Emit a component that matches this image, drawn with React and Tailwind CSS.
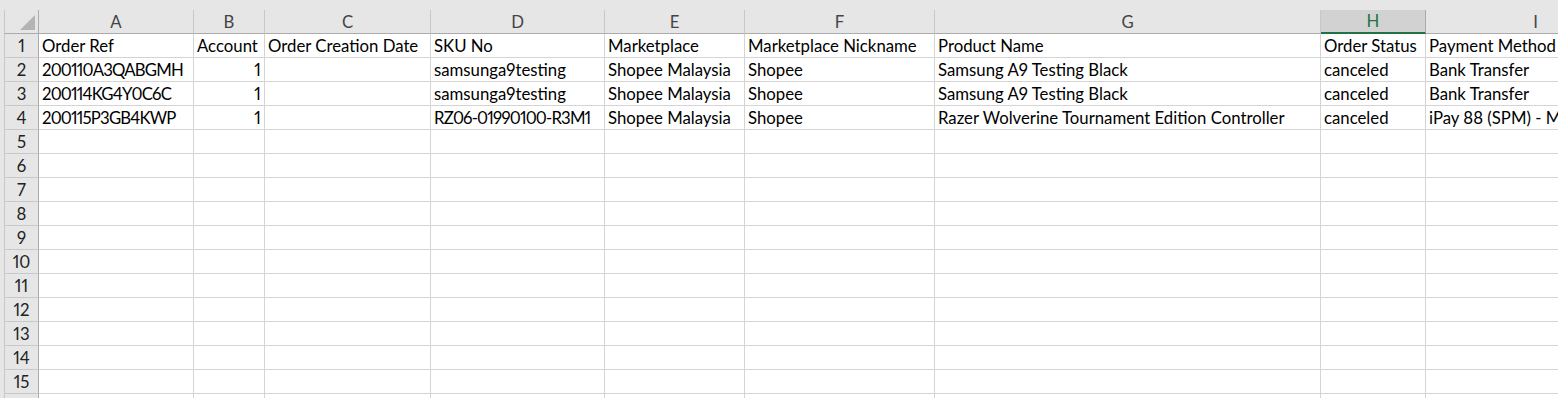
import React from 'react';

const columns = [
  { key: 'A', width: 'w-[155px]' },
  { key: 'B', width: 'w-[71px]' },
  { key: 'C', width: 'w-[166px]' },
  { key: 'D', width: 'w-[174px]' },
  { key: 'E', width: 'w-[140px]' },
  { key: 'F', width: 'w-[190px]' },
  { key: 'G', width: 'w-[386px]' },
  { key: 'H', width: 'w-[105px]' },
  { key: 'I', width: 'w-[220px]' },
];

const rows = [
  ['Order Ref', 'Account', 'Order Creation Date', 'SKU No', 'Marketplace', 'Marketplace Nickname', 'Product Name', 'Order Status', 'Payment Method'],
  ['200110A3QABGMH', 1, '', 'samsunga9testing', 'Shopee Malaysia', 'Shopee', 'Samsung A9 Testing Black', 'canceled', 'Bank Transfer'],
  ['200114KG4Y0C6C', 1, '', 'samsunga9testing', 'Shopee Malaysia', 'Shopee', 'Samsung A9 Testing Black', 'canceled', 'Bank Transfer'],
  ['200115P3GB4KWP', 1, '', 'RZ06-01990100-R3M1', 'Shopee Malaysia', 'Shopee', 'Razer Wolverine Tournament Edition Controller', 'canceled', 'iPay 88 (SPM) - Maybank2u'],
];

// rows 5..15 are empty, plus a sliver of row 16 at the bottom edge
const blankRows = Array.from({ length: 11 }, (_, i) => i + 5);

// order refs and SKUs are all caps + digits, which run wider in Lato than in Calibri
const isCode = (v) => typeof v === 'string' && /^[A-Z0-9-]{10,}$/.test(v);

const Cell = ({ width, value }) => {
  const isNumber = typeof value === 'number';
  return (
    <div
      className={`${width} shrink-0 h-full border-r border-b border-[#d4d4d4] px-[3px] pt-[1px] flex items-center overflow-hidden whitespace-nowrap ${
        isNumber ? 'justify-end' : 'justify-start'
      } ${isCode(value) ? 'tracking-[-0.05em]' : ''}`}
    >
      {value}
    </div>
  );
};

const RowHeader = ({ n }) => (
  <div className="w-[35px] shrink-0 h-full pt-[1px] bg-[#e6e6e6] border-l border-l-[#c8c8c8] border-r border-r-[#ababab] border-b border-b-[#c8c8c8] flex items-center justify-center text-[#222]">
    {n}
  </div>
);

const App = () => {
  return (
    <div className="w-[1558px] h-[398px] overflow-hidden bg-white font-['Lato',sans-serif] text-[16.75px] text-black leading-none proportional-nums">
      {/* top strip */}
      <div className="h-[10px] bg-[#e6e6e6]" />

      {/* column headers */}
      <div className="flex h-[24px] bg-[#e6e6e6]">
        <div className="w-[4px] shrink-0" />
        <div className="relative w-[35px] shrink-0 h-full border-l border-l-[#c8c8c8] border-r border-b border-[#ababab]">
          <svg className="absolute left-[15px] top-[5px]" width="16" height="15" viewBox="0 0 16 15">
            <polygon points="15,0 15,15 0,15" fill="#b4b4b4" />
          </svg>
        </div>
        {columns.map((col) =>
          col.key === 'H' ? (
            <div
              key={col.key}
              className={`${col.width} shrink-0 h-full pt-[1px] bg-[#d2d2d2] border-r border-r-[#ababab] border-b-2 border-b-[#217346] flex items-center justify-center text-[#217346]`}
            >
              {col.key}
            </div>
          ) : (
            <div
              key={col.key}
              className={`${col.width} shrink-0 h-full pt-[1px] border-r border-r-[#c8c8c8] border-b border-b-[#ababab] flex items-center justify-center text-[#444]`}
            >
              {col.key}
            </div>
          )
        )}
      </div>

      {/* data rows */}
      {rows.map((row, i) => (
        <div key={i} className="flex h-[24px]">
          <div className="w-[4px] shrink-0 bg-[#e6e6e6]" />
          <RowHeader n={i + 1} />
          {columns.map((col, j) => (
            <Cell key={col.key} width={col.width} value={row[j]} />
          ))}
        </div>
      ))}

      {blankRows.map((n) => (
        <div key={n} className="flex h-[24px]">
          <div className="w-[4px] shrink-0 bg-[#e6e6e6]" />
          <RowHeader n={n} />
          {columns.map((col) => (
            <Cell key={col.key} width={col.width} value="" />
          ))}
        </div>
      ))}

      <div className="flex h-[24px]">
        <div className="w-[4px] shrink-0 bg-[#e6e6e6]" />
        <RowHeader n="" />
        {columns.map((col) => (
          <Cell key={col.key} width={col.width} value="" />
        ))}
      </div>
    </div>
  );
};

export default App;
